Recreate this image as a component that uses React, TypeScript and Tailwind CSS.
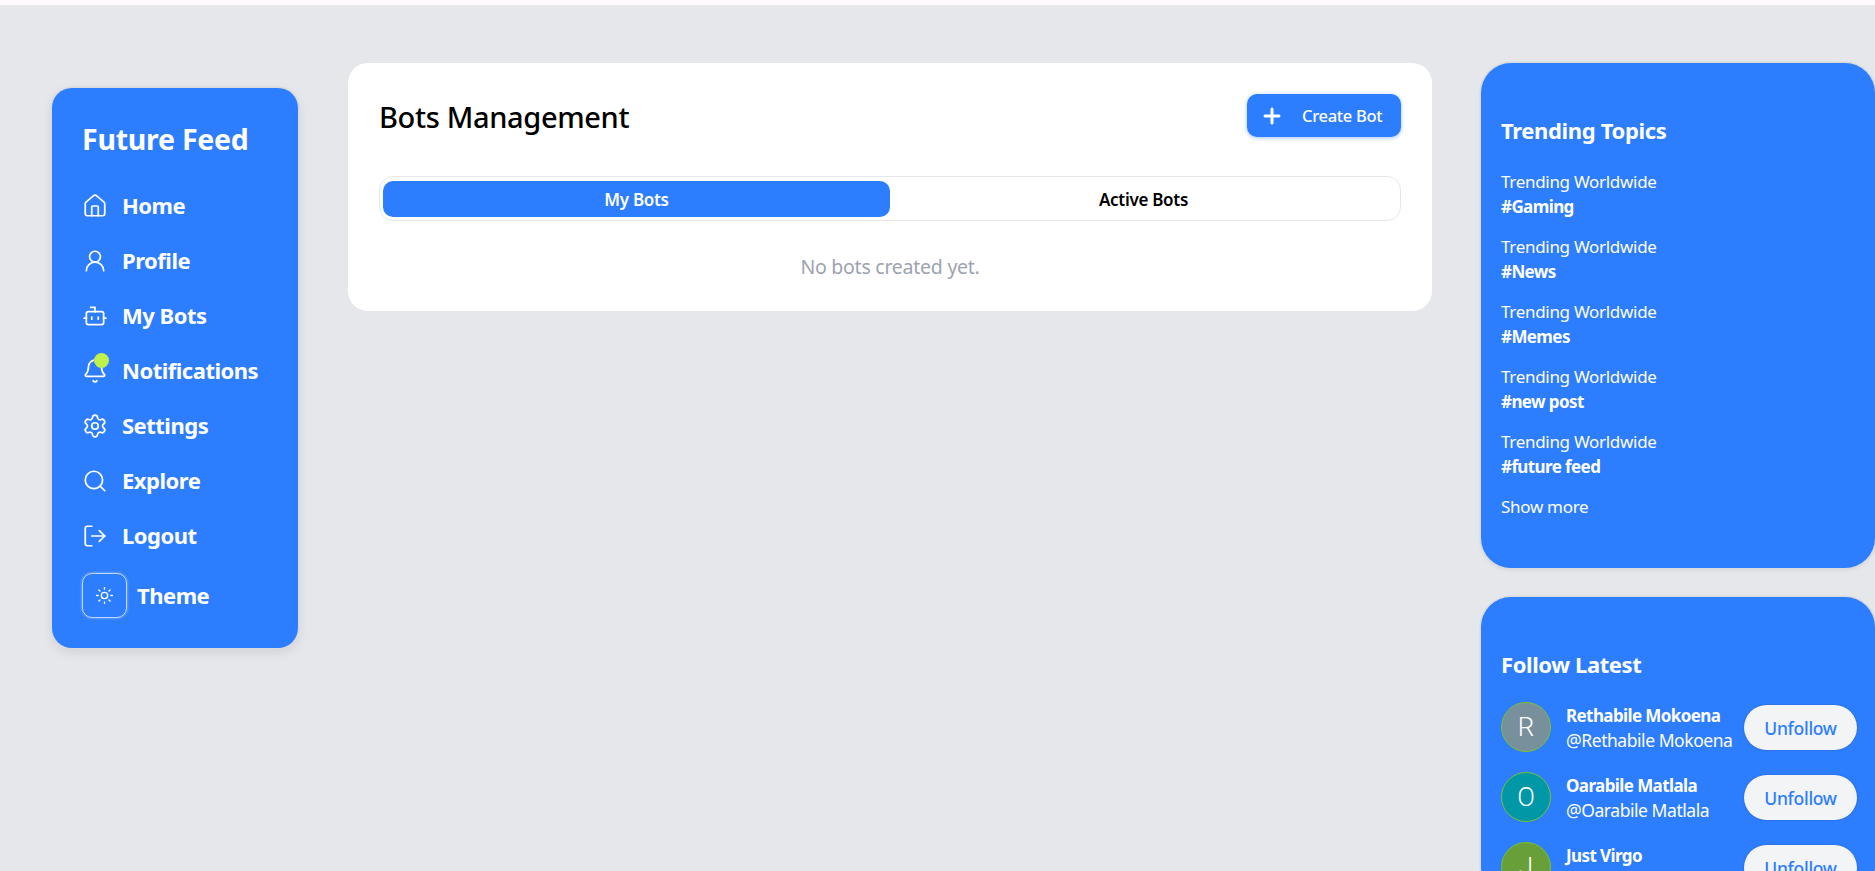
import React from "react";
import { House, UserRound, Bot, Bell, Settings, Search, LogOut, Sun, Plus } from "lucide-react";

const nav = [
  { label: "Home", Icon: House },
  { label: "Profile", Icon: UserRound },
  { label: "My Bots", Icon: Bot },
  { label: "Notifications", Icon: Bell, dot: true },
  { label: "Settings", Icon: Settings },
  { label: "Explore", Icon: Search },
  { label: "Logout", Icon: LogOut },
];
const topics = ["#Gaming", "#News", "#Memes", "#new post", "#future feed"];
const people = [
  { name: "Rethabile Mokoena", handle: "@Rethabile Mokoena", initial: "R", color: "bg-[#78909c]" },
  { name: "Oarabile Matlala", handle: "@Oarabile Matlala", initial: "O", color: "bg-[#0097a7]" },
  { name: "Just Virgo", handle: "@Just Virgo", initial: "J", color: "bg-[#689f38]" },
];

export default function App() {
  return (
    <div className="h-[871px] w-[1875px] overflow-hidden bg-[#e5e7eb] font-['Noto_Sans',sans-serif]">
      <div className="h-[5px] bg-[#fff8fd]" />
      <div className="flex items-start pl-[52px]">
        <aside className="mt-[83px] h-[560px] w-[246px] shrink-0 rounded-[20px] bg-[#2d7dff] pl-[30px] pt-[29px] text-white shadow-[0_0_0_1.5px_#d8dade,0_4px_12px_rgba(0,0,0,0.1)]">
          <h1 className="h-[44px] whitespace-nowrap text-[28.5px] font-bold leading-[44px] tracking-[-0.25px]">Future Feed</h1>
          <nav className="mt-[17px] flex flex-col">
            {nav.map(({ label, Icon, dot }) => (
              <div key={label} className="flex h-[55px] items-center gap-[14px]">
                <div className="relative h-[26px] w-[26px]">
                  <Icon size={26} strokeWidth={1.6} />
                  {dot && <span className="absolute left-[12px] top-[-5px] h-[15px] w-[15px] rounded-full bg-[#bef24a]" />}
                </div>
                <span className="text-[22px] font-bold tracking-[-0.5px]">{label}</span>
              </div>
            ))}
          </nav>
          <div className="mt-[10px] flex items-center gap-[10px]">
            <div className="flex h-[45px] w-[45px] items-center justify-center rounded-[10px] border border-white/70 shadow-[0_0_3px_rgba(255,255,255,0.5)]">
              <Sun size={19} strokeWidth={1.7} />
            </div>
            <span className="text-[22px] font-bold tracking-[-0.5px]">Theme</span>
          </div>
        </aside>

        <main className="ml-[50px] mt-[58px] h-[248px] w-[1084px] shrink-0 rounded-[20px] bg-white px-[31px] pt-[31px]">
          <div className="flex h-[43px] items-center justify-between">
            <h2 className="pt-[2px] text-[29px] font-medium tracking-[-0.35px] text-black">Bots Management</h2>
            <button className="flex h-[43px] w-[154px] items-center rounded-[10px] bg-[#2d7dff] pl-[13px] text-[16.5px] font-medium text-white shadow-[0_1px_4px_rgba(45,125,255,0.45)]">
              <Plus size={24} strokeWidth={3} />
              <span className="ml-[18px] pt-[2px] tracking-[-0.3px]">Create Bot</span>
            </button>
          </div>
          <div className="mt-[39px] flex h-[45px] items-center rounded-[14px] border border-[#e5e7eb] px-[3px] pt-[1px]">
            <div className="flex h-[36px] flex-1 items-center justify-center rounded-[10px] bg-[#2d7dff] pt-[1px] text-[17px] font-semibold tracking-[-0.3px] text-white">My Bots</div>
            <div className="flex h-[36px] flex-1 items-center justify-center pt-[1px] text-[17px] font-semibold tracking-[-0.3px] text-black">Active Bots</div>
          </div>
          <p className="mt-[32px] text-center text-[19.5px] leading-[28px] tracking-[-0.25px] text-[#9ca3af]">No bots created yet.</p>
        </main>

        <div className="ml-[49px] mt-[58px] flex w-[394px] shrink-0 flex-col gap-[29px] text-white">
          <section className="h-[505px] rounded-[30px] bg-[#2d7dff] px-[20px] pt-[52px] shadow-[0_0_0_1.5px_#d8dade,0_2px_4px_rgba(0,0,0,0.08)]">
            <h3 className="text-[22px] font-bold leading-[30px] tracking-[-0.35px]">Trending Topics</h3>
            <div className="mt-[24px] flex flex-col gap-[15px]">
              {topics.map((t) => (
                <div key={t} className="h-[50px]">
                  <div className="text-[17px] leading-[25px] tracking-[-0.3px]">Trending Worldwide</div>
                  <div className="text-[17px] font-bold leading-[25px] tracking-[-0.6px]">{t}</div>
                </div>
              ))}
            </div>
            <div className="mt-[15px] text-[17px] leading-[25px] tracking-[-0.3px]">Show more</div>
          </section>
          <section className="h-[300px] rounded-[30px] bg-[#2d7dff] px-[20px] pt-[52px] shadow-[0_0_0_1.5px_#d8dade]">
            <h3 className="text-[22px] font-bold leading-[30px] tracking-[-0.4px]">Follow Latest</h3>
            <div className="mt-[23px] flex flex-col gap-[20px]">
              {people.map((p) => (
                <div key={p.name} className="flex h-[50px] items-center">
                  <div className={`flex h-[50px] w-[50px] shrink-0 items-center justify-center rounded-full border border-[#7cc22a] font-['Roboto',sans-serif] text-[26px] font-light ${p.color}`}>{p.initial}</div>
                  <div className="ml-[15px] w-[178px] shrink-0 pt-[2px]">
                    <div className="whitespace-nowrap text-[17px] font-bold leading-[25px] tracking-[-0.6px]">{p.name}</div>
                    <div className="whitespace-nowrap text-[17.5px] leading-[25px] tracking-[-0.45px]">{p.handle}</div>
                  </div>
                  <button className="h-[45px] w-[113px] shrink-0 rounded-full bg-[#f3f4f6] pt-[2px] text-[17.5px] font-medium tracking-[-0.3px] text-[#2d7dff] shadow-[0_0_2px_rgba(0,0,0,0.25)]">Unfollow</button>
                </div>
              ))}
            </div>
          </section>
        </div>
      </div>
    </div>
  );
}
